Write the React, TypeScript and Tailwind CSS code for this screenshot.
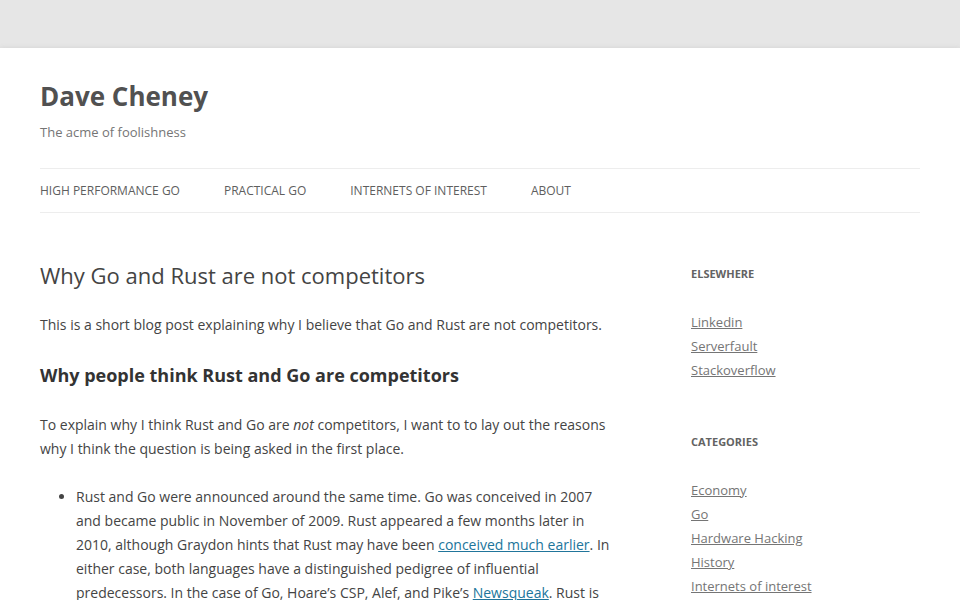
import React from 'react';

const navItems = ['High Performance Go', 'Practical Go', 'Internets of Interest', 'About'];

const widgets = [
  { title: 'Elsewhere', links: ['Linkedin', 'Serverfault', 'Stackoverflow'] },
  {
    title: 'Categories',
    links: ['Economy', 'Go', 'Hardware Hacking', 'History', 'Internets of interest', 'Programming', 'Small ideas'],
  },
];

function Link({ children }: { children: React.ReactNode }) {
  return <a href="#" className="text-[#21759b] underline">{children}</a>;
}

export default function App() {
  return (
    <div className="min-h-screen bg-[#e6e6e6] pt-12 font-['Open_Sans',sans-serif] text-[#444]">
      <div className="min-h-[700px] bg-white px-10 shadow-[0_2px_6px_rgba(100,100,100,0.3)]">
        {/* site header */}
        <header className="py-6">
          <h1 className="text-[26px] leading-[48px] font-bold text-[#515151]">Dave Cheney</h1>
          <h2 className="text-[13px] leading-6 text-[#757575]">The acme of foolishness</h2>
          <nav className="mt-6 border-y border-[#ededed]">
            <ul className="flex gap-11">
              {navItems.map((item) => (
                <li key={item} className="text-[12px] leading-[43px] uppercase text-[#5e5e5e]">
                  {item}
                </li>
              ))}
            </ul>
          </nav>
        </header>

        <div className="flex justify-between pt-[24px]">
          {/* post */}
          <main className="w-[573px]">
            <h1 className="pt-px text-[22px] leading-[26px] text-[#444]">Why Go and Rust are not competitors</h1>
            <div className="mt-[25px] text-[14px] leading-6">
              <p className="mb-6">
                This is a short blog post explaining why I believe that Go and Rust are not competitors.
              </p>
              <h2 className="mb-6 text-[18px] leading-[28px] font-bold text-[#333]">
                Why people think Rust and Go are competitors
              </h2>
              <p className="mb-6">
                To explain why I think Rust and Go are <em>not</em> competitors, I want to to lay out the reasons
                why I think the question is being asked in the first place.
              </p>
              <ul className="ml-9 list-disc">
                <li>
                  Rust and Go were announced around the same time. Go was conceived in 2007 and became public in
                  November of 2009. Rust appeared a few months later in 2010, although Graydon hints that Rust may
                  have been <Link>conceived much earlier</Link>. In either case, both languages have a distinguished
                  pedigree of influential predecessors. In the case of Go, Hoare&rsquo;s CSP, Alef, and
                  Pike&rsquo;s <Link>Newsqueak</Link>. Rust is said to draw on Cyclone, ML, and Haskell.
                </li>
              </ul>
            </div>
          </main>

          {/* sidebar */}
          <aside className="mt-px w-[229px]">
            {widgets.map((w) => (
              <section key={w.title} className="mb-12">
                <h3 className="mb-6 text-[11px] leading-6 font-bold uppercase text-[#636363]">{w.title}</h3>
                <ul className="text-[13px] leading-6">
                  {w.links.map((l) => (
                    <li key={l}>
                      <a href="#" className="text-[#757575] underline">{l}</a>
                    </li>
                  ))}
                </ul>
              </section>
            ))}
          </aside>
        </div>
      </div>
    </div>
  );
}
